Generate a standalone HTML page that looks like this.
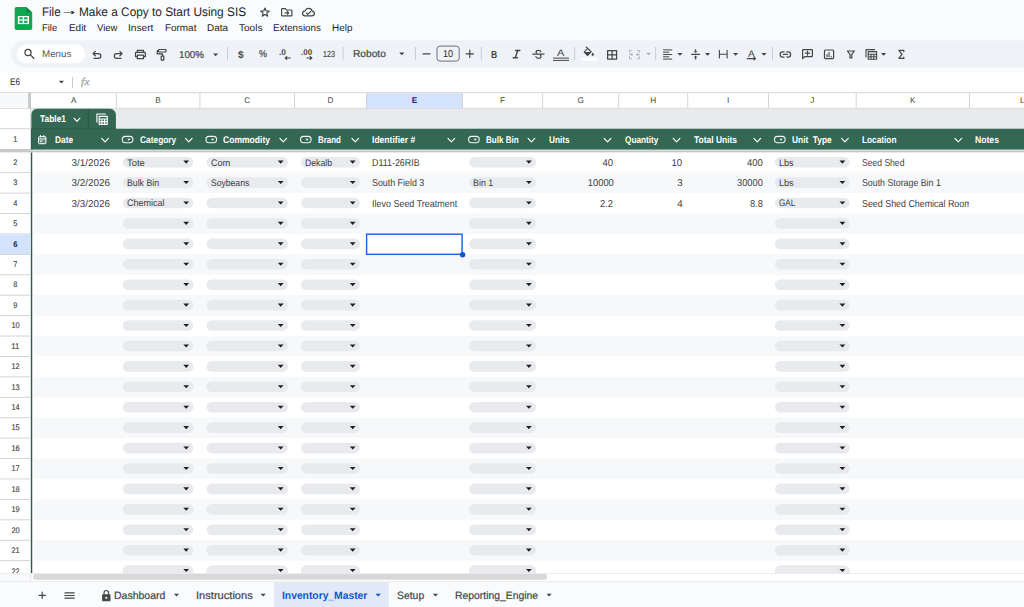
<!DOCTYPE html>
<html lang="en"><head><meta charset="utf-8"><title>File - Make a Copy to Start Using SIS</title>
<style>
html,body{margin:0;padding:0;}
body{width:1024px;height:607px;overflow:hidden;position:relative;background:#f9fbfd;font-family:"Liberation Sans",sans-serif;}
.b{position:absolute;}
.t{position:absolute;white-space:nowrap;display:block;text-rendering:geometricPrecision;}
svg.ov{position:absolute;left:0;top:0;pointer-events:none;}
</style></head><body>
<svg class="ov" width="1024" height="607" viewBox="0 0 1024 607">
<rect x="11.00" y="40.40" width="1040.00" height="26.80" rx="13.4" ry="13.4" fill="#eff2f7"/>
<rect x="16.80" y="44.40" width="68.40" height="18.80" rx="9.4" ry="9.4" fill="#fff"/>
<rect x="0.00" y="72.60" width="1024.00" height="19.80" fill="#fff"/>
<rect x="227.00" y="47.00" width="0.90" height="13.20" fill="#c7c7c7"/>
<rect x="342.60" y="47.00" width="0.90" height="13.20" fill="#c7c7c7"/>
<rect x="414.90" y="47.00" width="0.90" height="13.20" fill="#c7c7c7"/>
<rect x="437.00" y="46.10" width="22.20" height="15.00" rx="3" ry="3" fill="none" stroke="#5f6368" stroke-width="0.9"/>
<rect x="480.80" y="47.00" width="0.90" height="13.20" fill="#c7c7c7"/>
<rect x="553.00" y="57.60" width="16.00" height="1.00" fill="#444746"/>
<rect x="553.00" y="59.90" width="16.00" height="1.00" fill="#444746"/>
<rect x="574.20" y="47.00" width="0.90" height="13.20" fill="#c7c7c7"/>
<rect x="581.00" y="58.00" width="16.00" height="2.70" fill="#fff"/>
<rect x="655.20" y="47.00" width="0.90" height="13.20" fill="#c7c7c7"/>
<rect x="663.10" y="49.40" width="9.10" height="1.00" fill="#444746"/>
<rect x="663.10" y="51.70" width="6.10" height="1.00" fill="#444746"/>
<rect x="663.10" y="54.00" width="9.10" height="1.00" fill="#444746"/>
<rect x="663.10" y="56.30" width="6.10" height="1.00" fill="#444746"/>
<rect x="663.10" y="58.60" width="9.10" height="1.00" fill="#444746"/>
<rect x="772.10" y="47.00" width="0.90" height="13.20" fill="#c7c7c7"/>
<rect x="72.10" y="77.00" width="0.90" height="11.00" fill="#c7c7c7"/>
<rect x="0.00" y="92.40" width="1024.00" height="480.60" fill="#fff"/>
<rect x="0.00" y="92.30" width="1024.00" height="0.90" fill="#d0d0d0"/>
<rect x="0.00" y="107.90" width="1024.00" height="0.90" fill="#cfcfcf"/>
<rect x="0.00" y="93.20" width="28.20" height="14.70" fill="#f8f9fa"/>
<rect x="28.20" y="92.80" width="2.80" height="16.00" fill="#c4c7c5"/>
<rect x="366.40" y="93.20" width="96.10" height="14.70" fill="#d3e3fd"/>
<rect x="115.80" y="93.20" width="0.90" height="14.70" fill="#cfcfcf"/>
<rect x="199.50" y="93.20" width="0.90" height="14.70" fill="#cfcfcf"/>
<rect x="294.00" y="93.20" width="0.90" height="14.70" fill="#cfcfcf"/>
<rect x="366.00" y="93.20" width="0.90" height="14.70" fill="#cfcfcf"/>
<rect x="462.10" y="93.20" width="0.90" height="14.70" fill="#cfcfcf"/>
<rect x="542.20" y="93.20" width="0.90" height="14.70" fill="#cfcfcf"/>
<rect x="618.30" y="93.20" width="0.90" height="14.70" fill="#cfcfcf"/>
<rect x="687.30" y="93.20" width="0.90" height="14.70" fill="#cfcfcf"/>
<rect x="768.00" y="93.20" width="0.90" height="14.70" fill="#cfcfcf"/>
<rect x="855.70" y="93.20" width="0.90" height="14.70" fill="#cfcfcf"/>
<rect x="969.00" y="93.20" width="0.90" height="14.70" fill="#cfcfcf"/>
<rect x="31.30" y="108.80" width="1024.00" height="19.90" fill="#e8eaed"/>
<path d="M37.20 108.80H109.90A6 6 0 0 1 115.90 114.80V129.20H31.20V114.80A6 6 0 0 1 37.20 108.80Z" fill="#356854"/>
<rect x="87.80" y="108.90" width="0.90" height="19.90" fill="#2b5643"/>
<rect x="31.30" y="128.70" width="1024.00" height="21.05" fill="#356854"/>
<rect x="31.30" y="128.40" width="84.60" height="0.80" fill="#2e5a47"/>
<rect x="0.00" y="108.80" width="30.40" height="464.20" fill="#fff"/>
<rect x="30.30" y="108.80" width="0.90" height="464.20" fill="#cfcfcf"/>
<rect x="31.00" y="128.70" width="1.25" height="21.05" fill="#2f5c4a"/>
<rect x="31.00" y="152.30" width="1.25" height="420.70" fill="#2f5c4a"/>
<rect x="0.00" y="172.22" width="30.30" height="0.90" fill="#cfcfcf"/>
<rect x="33.60" y="172.62" width="1024.00" height="20.42" fill="#f6f8f9"/>
<rect x="0.00" y="192.64" width="30.30" height="0.90" fill="#cfcfcf"/>
<rect x="0.00" y="213.06" width="30.30" height="0.90" fill="#cfcfcf"/>
<rect x="33.60" y="213.46" width="1024.00" height="20.42" fill="#f6f8f9"/>
<rect x="0.00" y="233.48" width="30.30" height="0.90" fill="#cfcfcf"/>
<rect x="0.00" y="234.28" width="30.30" height="19.92" fill="#d3e3fd"/>
<rect x="0.00" y="253.90" width="30.30" height="0.90" fill="#cfcfcf"/>
<rect x="33.60" y="254.30" width="1024.00" height="20.42" fill="#f6f8f9"/>
<rect x="0.00" y="274.32" width="30.30" height="0.90" fill="#cfcfcf"/>
<rect x="0.00" y="294.74" width="30.30" height="0.90" fill="#cfcfcf"/>
<rect x="33.60" y="295.14" width="1024.00" height="20.42" fill="#f6f8f9"/>
<rect x="0.00" y="315.16" width="30.30" height="0.90" fill="#cfcfcf"/>
<rect x="0.00" y="335.58" width="30.30" height="0.90" fill="#cfcfcf"/>
<rect x="33.60" y="335.98" width="1024.00" height="20.42" fill="#f6f8f9"/>
<rect x="0.00" y="356.00" width="30.30" height="0.90" fill="#cfcfcf"/>
<rect x="0.00" y="376.42" width="30.30" height="0.90" fill="#cfcfcf"/>
<rect x="33.60" y="376.82" width="1024.00" height="20.42" fill="#f6f8f9"/>
<rect x="0.00" y="396.84" width="30.30" height="0.90" fill="#cfcfcf"/>
<rect x="0.00" y="417.26" width="30.30" height="0.90" fill="#cfcfcf"/>
<rect x="33.60" y="417.66" width="1024.00" height="20.42" fill="#f6f8f9"/>
<rect x="0.00" y="437.68" width="30.30" height="0.90" fill="#cfcfcf"/>
<rect x="0.00" y="458.10" width="30.30" height="0.90" fill="#cfcfcf"/>
<rect x="33.60" y="458.50" width="1024.00" height="20.42" fill="#f6f8f9"/>
<rect x="0.00" y="478.52" width="30.30" height="0.90" fill="#cfcfcf"/>
<rect x="0.00" y="498.94" width="30.30" height="0.90" fill="#cfcfcf"/>
<rect x="33.60" y="499.34" width="1024.00" height="20.42" fill="#f6f8f9"/>
<rect x="0.00" y="519.36" width="30.30" height="0.90" fill="#cfcfcf"/>
<rect x="0.00" y="539.78" width="30.30" height="0.90" fill="#cfcfcf"/>
<rect x="33.60" y="540.18" width="1024.00" height="20.42" fill="#f6f8f9"/>
<rect x="0.00" y="560.20" width="30.30" height="0.90" fill="#cfcfcf"/>
<rect x="0.00" y="128.30" width="30.30" height="0.90" fill="#cfcfcf"/>
<rect x="0.00" y="149.00" width="31.00" height="3.35" fill="#c8c8c8"/>
<rect x="31.00" y="149.75" width="1024.00" height="0.90" fill="#e2e2e2"/>
<rect x="31.00" y="150.60" width="1024.00" height="1.75" fill="#c6c6c6"/>
<rect x="39.00" y="139.30" width="6.40" height="3.90" fill="rgba(255,255,255,0.22)"/>
<rect x="40.00" y="140.20" width="2.20" height="2.00" fill="rgba(255,255,255,0.6)"/>
<rect x="122.80" y="156.90" width="70.60" height="10.60" rx="5.3" ry="5.3" fill="#e8eaed"/>
<rect x="206.50" y="156.90" width="81.40" height="10.60" rx="5.3" ry="5.3" fill="#e8eaed"/>
<rect x="301.00" y="156.90" width="58.90" height="10.60" rx="5.3" ry="5.3" fill="#e8eaed"/>
<rect x="469.10" y="156.90" width="67.00" height="10.60" rx="5.3" ry="5.3" fill="#e8eaed"/>
<rect x="775.00" y="156.90" width="74.60" height="10.60" rx="5.3" ry="5.3" fill="#e8eaed"/>
<rect x="122.80" y="177.32" width="70.60" height="10.60" rx="5.3" ry="5.3" fill="#e8eaed"/>
<rect x="206.50" y="177.32" width="81.40" height="10.60" rx="5.3" ry="5.3" fill="#e8eaed"/>
<rect x="301.00" y="177.32" width="58.90" height="10.60" rx="5.3" ry="5.3" fill="#e8eaed"/>
<rect x="469.10" y="177.32" width="67.00" height="10.60" rx="5.3" ry="5.3" fill="#e8eaed"/>
<rect x="775.00" y="177.32" width="74.60" height="10.60" rx="5.3" ry="5.3" fill="#e8eaed"/>
<rect x="122.80" y="197.74" width="70.60" height="10.60" rx="5.3" ry="5.3" fill="#e8eaed"/>
<rect x="206.50" y="197.74" width="81.40" height="10.60" rx="5.3" ry="5.3" fill="#e8eaed"/>
<rect x="301.00" y="197.74" width="58.90" height="10.60" rx="5.3" ry="5.3" fill="#e8eaed"/>
<rect x="469.10" y="197.74" width="67.00" height="10.60" rx="5.3" ry="5.3" fill="#e8eaed"/>
<rect x="775.00" y="197.74" width="74.60" height="10.60" rx="5.3" ry="5.3" fill="#e8eaed"/>
<rect x="122.80" y="218.16" width="70.60" height="10.60" rx="5.3" ry="5.3" fill="#e8eaed"/>
<rect x="206.50" y="218.16" width="81.40" height="10.60" rx="5.3" ry="5.3" fill="#e8eaed"/>
<rect x="301.00" y="218.16" width="58.90" height="10.60" rx="5.3" ry="5.3" fill="#e8eaed"/>
<rect x="469.10" y="218.16" width="67.00" height="10.60" rx="5.3" ry="5.3" fill="#e8eaed"/>
<rect x="775.00" y="218.16" width="74.60" height="10.60" rx="5.3" ry="5.3" fill="#e8eaed"/>
<rect x="122.80" y="238.58" width="70.60" height="10.60" rx="5.3" ry="5.3" fill="#e8eaed"/>
<rect x="206.50" y="238.58" width="81.40" height="10.60" rx="5.3" ry="5.3" fill="#e8eaed"/>
<rect x="301.00" y="238.58" width="58.90" height="10.60" rx="5.3" ry="5.3" fill="#e8eaed"/>
<rect x="469.10" y="238.58" width="67.00" height="10.60" rx="5.3" ry="5.3" fill="#e8eaed"/>
<rect x="775.00" y="238.58" width="74.60" height="10.60" rx="5.3" ry="5.3" fill="#e8eaed"/>
<rect x="122.80" y="259.00" width="70.60" height="10.60" rx="5.3" ry="5.3" fill="#e8eaed"/>
<rect x="206.50" y="259.00" width="81.40" height="10.60" rx="5.3" ry="5.3" fill="#e8eaed"/>
<rect x="301.00" y="259.00" width="58.90" height="10.60" rx="5.3" ry="5.3" fill="#e8eaed"/>
<rect x="469.10" y="259.00" width="67.00" height="10.60" rx="5.3" ry="5.3" fill="#e8eaed"/>
<rect x="775.00" y="259.00" width="74.60" height="10.60" rx="5.3" ry="5.3" fill="#e8eaed"/>
<rect x="122.80" y="279.42" width="70.60" height="10.60" rx="5.3" ry="5.3" fill="#e8eaed"/>
<rect x="206.50" y="279.42" width="81.40" height="10.60" rx="5.3" ry="5.3" fill="#e8eaed"/>
<rect x="301.00" y="279.42" width="58.90" height="10.60" rx="5.3" ry="5.3" fill="#e8eaed"/>
<rect x="469.10" y="279.42" width="67.00" height="10.60" rx="5.3" ry="5.3" fill="#e8eaed"/>
<rect x="775.00" y="279.42" width="74.60" height="10.60" rx="5.3" ry="5.3" fill="#e8eaed"/>
<rect x="122.80" y="299.84" width="70.60" height="10.60" rx="5.3" ry="5.3" fill="#e8eaed"/>
<rect x="206.50" y="299.84" width="81.40" height="10.60" rx="5.3" ry="5.3" fill="#e8eaed"/>
<rect x="301.00" y="299.84" width="58.90" height="10.60" rx="5.3" ry="5.3" fill="#e8eaed"/>
<rect x="469.10" y="299.84" width="67.00" height="10.60" rx="5.3" ry="5.3" fill="#e8eaed"/>
<rect x="775.00" y="299.84" width="74.60" height="10.60" rx="5.3" ry="5.3" fill="#e8eaed"/>
<rect x="122.80" y="320.26" width="70.60" height="10.60" rx="5.3" ry="5.3" fill="#e8eaed"/>
<rect x="206.50" y="320.26" width="81.40" height="10.60" rx="5.3" ry="5.3" fill="#e8eaed"/>
<rect x="301.00" y="320.26" width="58.90" height="10.60" rx="5.3" ry="5.3" fill="#e8eaed"/>
<rect x="469.10" y="320.26" width="67.00" height="10.60" rx="5.3" ry="5.3" fill="#e8eaed"/>
<rect x="775.00" y="320.26" width="74.60" height="10.60" rx="5.3" ry="5.3" fill="#e8eaed"/>
<rect x="122.80" y="340.68" width="70.60" height="10.60" rx="5.3" ry="5.3" fill="#e8eaed"/>
<rect x="206.50" y="340.68" width="81.40" height="10.60" rx="5.3" ry="5.3" fill="#e8eaed"/>
<rect x="301.00" y="340.68" width="58.90" height="10.60" rx="5.3" ry="5.3" fill="#e8eaed"/>
<rect x="469.10" y="340.68" width="67.00" height="10.60" rx="5.3" ry="5.3" fill="#e8eaed"/>
<rect x="775.00" y="340.68" width="74.60" height="10.60" rx="5.3" ry="5.3" fill="#e8eaed"/>
<rect x="122.80" y="361.10" width="70.60" height="10.60" rx="5.3" ry="5.3" fill="#e8eaed"/>
<rect x="206.50" y="361.10" width="81.40" height="10.60" rx="5.3" ry="5.3" fill="#e8eaed"/>
<rect x="301.00" y="361.10" width="58.90" height="10.60" rx="5.3" ry="5.3" fill="#e8eaed"/>
<rect x="469.10" y="361.10" width="67.00" height="10.60" rx="5.3" ry="5.3" fill="#e8eaed"/>
<rect x="775.00" y="361.10" width="74.60" height="10.60" rx="5.3" ry="5.3" fill="#e8eaed"/>
<rect x="122.80" y="381.52" width="70.60" height="10.60" rx="5.3" ry="5.3" fill="#e8eaed"/>
<rect x="206.50" y="381.52" width="81.40" height="10.60" rx="5.3" ry="5.3" fill="#e8eaed"/>
<rect x="301.00" y="381.52" width="58.90" height="10.60" rx="5.3" ry="5.3" fill="#e8eaed"/>
<rect x="469.10" y="381.52" width="67.00" height="10.60" rx="5.3" ry="5.3" fill="#e8eaed"/>
<rect x="775.00" y="381.52" width="74.60" height="10.60" rx="5.3" ry="5.3" fill="#e8eaed"/>
<rect x="122.80" y="401.94" width="70.60" height="10.60" rx="5.3" ry="5.3" fill="#e8eaed"/>
<rect x="206.50" y="401.94" width="81.40" height="10.60" rx="5.3" ry="5.3" fill="#e8eaed"/>
<rect x="301.00" y="401.94" width="58.90" height="10.60" rx="5.3" ry="5.3" fill="#e8eaed"/>
<rect x="469.10" y="401.94" width="67.00" height="10.60" rx="5.3" ry="5.3" fill="#e8eaed"/>
<rect x="775.00" y="401.94" width="74.60" height="10.60" rx="5.3" ry="5.3" fill="#e8eaed"/>
<rect x="122.80" y="422.36" width="70.60" height="10.60" rx="5.3" ry="5.3" fill="#e8eaed"/>
<rect x="206.50" y="422.36" width="81.40" height="10.60" rx="5.3" ry="5.3" fill="#e8eaed"/>
<rect x="301.00" y="422.36" width="58.90" height="10.60" rx="5.3" ry="5.3" fill="#e8eaed"/>
<rect x="469.10" y="422.36" width="67.00" height="10.60" rx="5.3" ry="5.3" fill="#e8eaed"/>
<rect x="775.00" y="422.36" width="74.60" height="10.60" rx="5.3" ry="5.3" fill="#e8eaed"/>
<rect x="122.80" y="442.78" width="70.60" height="10.60" rx="5.3" ry="5.3" fill="#e8eaed"/>
<rect x="206.50" y="442.78" width="81.40" height="10.60" rx="5.3" ry="5.3" fill="#e8eaed"/>
<rect x="301.00" y="442.78" width="58.90" height="10.60" rx="5.3" ry="5.3" fill="#e8eaed"/>
<rect x="469.10" y="442.78" width="67.00" height="10.60" rx="5.3" ry="5.3" fill="#e8eaed"/>
<rect x="775.00" y="442.78" width="74.60" height="10.60" rx="5.3" ry="5.3" fill="#e8eaed"/>
<rect x="122.80" y="463.20" width="70.60" height="10.60" rx="5.3" ry="5.3" fill="#e8eaed"/>
<rect x="206.50" y="463.20" width="81.40" height="10.60" rx="5.3" ry="5.3" fill="#e8eaed"/>
<rect x="301.00" y="463.20" width="58.90" height="10.60" rx="5.3" ry="5.3" fill="#e8eaed"/>
<rect x="469.10" y="463.20" width="67.00" height="10.60" rx="5.3" ry="5.3" fill="#e8eaed"/>
<rect x="775.00" y="463.20" width="74.60" height="10.60" rx="5.3" ry="5.3" fill="#e8eaed"/>
<rect x="122.80" y="483.62" width="70.60" height="10.60" rx="5.3" ry="5.3" fill="#e8eaed"/>
<rect x="206.50" y="483.62" width="81.40" height="10.60" rx="5.3" ry="5.3" fill="#e8eaed"/>
<rect x="301.00" y="483.62" width="58.90" height="10.60" rx="5.3" ry="5.3" fill="#e8eaed"/>
<rect x="469.10" y="483.62" width="67.00" height="10.60" rx="5.3" ry="5.3" fill="#e8eaed"/>
<rect x="775.00" y="483.62" width="74.60" height="10.60" rx="5.3" ry="5.3" fill="#e8eaed"/>
<rect x="122.80" y="504.04" width="70.60" height="10.60" rx="5.3" ry="5.3" fill="#e8eaed"/>
<rect x="206.50" y="504.04" width="81.40" height="10.60" rx="5.3" ry="5.3" fill="#e8eaed"/>
<rect x="301.00" y="504.04" width="58.90" height="10.60" rx="5.3" ry="5.3" fill="#e8eaed"/>
<rect x="469.10" y="504.04" width="67.00" height="10.60" rx="5.3" ry="5.3" fill="#e8eaed"/>
<rect x="775.00" y="504.04" width="74.60" height="10.60" rx="5.3" ry="5.3" fill="#e8eaed"/>
<rect x="122.80" y="524.46" width="70.60" height="10.60" rx="5.3" ry="5.3" fill="#e8eaed"/>
<rect x="206.50" y="524.46" width="81.40" height="10.60" rx="5.3" ry="5.3" fill="#e8eaed"/>
<rect x="301.00" y="524.46" width="58.90" height="10.60" rx="5.3" ry="5.3" fill="#e8eaed"/>
<rect x="469.10" y="524.46" width="67.00" height="10.60" rx="5.3" ry="5.3" fill="#e8eaed"/>
<rect x="775.00" y="524.46" width="74.60" height="10.60" rx="5.3" ry="5.3" fill="#e8eaed"/>
<rect x="122.80" y="544.88" width="70.60" height="10.60" rx="5.3" ry="5.3" fill="#e8eaed"/>
<rect x="206.50" y="544.88" width="81.40" height="10.60" rx="5.3" ry="5.3" fill="#e8eaed"/>
<rect x="301.00" y="544.88" width="58.90" height="10.60" rx="5.3" ry="5.3" fill="#e8eaed"/>
<rect x="469.10" y="544.88" width="67.00" height="10.60" rx="5.3" ry="5.3" fill="#e8eaed"/>
<rect x="775.00" y="544.88" width="74.60" height="10.60" rx="5.3" ry="5.3" fill="#e8eaed"/>
<path d="M128.10 565.30H188.10A5.3 5.3 0 0 1 193.40 570.60V573.00H122.80V570.60A5.3 5.3 0 0 1 128.10 565.30Z" fill="#e8eaed"/>
<path d="M211.80 565.30H282.60A5.3 5.3 0 0 1 287.90 570.60V573.00H206.50V570.60A5.3 5.3 0 0 1 211.80 565.30Z" fill="#e8eaed"/>
<path d="M306.30 565.30H354.60A5.3 5.3 0 0 1 359.90 570.60V573.00H301.00V570.60A5.3 5.3 0 0 1 306.30 565.30Z" fill="#e8eaed"/>
<path d="M474.40 565.30H530.80A5.3 5.3 0 0 1 536.10 570.60V573.00H469.10V570.60A5.3 5.3 0 0 1 474.40 565.30Z" fill="#e8eaed"/>
<path d="M780.30 565.30H844.30A5.3 5.3 0 0 1 849.60 570.60V573.00H775.00V570.60A5.3 5.3 0 0 1 780.30 565.30Z" fill="#e8eaed"/>
<rect x="0.00" y="573.00" width="1024.00" height="0.80" fill="#e1e1e1"/>
<rect x="0.00" y="573.80" width="1024.00" height="8.00" fill="#fff"/>
<rect x="0.00" y="573.80" width="30.30" height="8.00" fill="#f8f9fa"/>
<rect x="30.30" y="573.80" width="0.90" height="8.00" fill="#dcdcdc"/>
<rect x="33.00" y="573.40" width="514.00" height="1.20" fill="#ececec"/>
<rect x="33.00" y="574.10" width="514.00" height="5.70" rx="2.7" ry="2.7" fill="#d8d8d8"/>
<rect x="0.00" y="581.40" width="1024.00" height="0.90" fill="#e1e3e6"/>
<rect x="0.00" y="582.30" width="1024.00" height="25.00" fill="#f9fbfd"/>
<rect x="274.10" y="582.30" width="114.70" height="25.00" fill="#e1e9f7"/>
</svg>
<span class="t" style="top:4.00px;height:16px;line-height:16px;font-size:12.4px;color:#1f1f1f;left:41.60px;transform:scaleX(0.9309);transform-origin:0 50%;">File</span>
<span class="t" style="top:7.00px;height:11px;line-height:11px;font-size:8px;color:#1f1f1f;font-family:'DejaVu Sans', sans-serif;left:63.40px;transform:scaleX(1.8);transform-origin:0 50%;">→</span>
<span class="t" style="top:4.00px;height:16px;line-height:16px;font-size:12.4px;color:#1f1f1f;left:79.20px;transform:scaleX(0.9551);transform-origin:0 50%;">Make a Copy to Start Using SIS</span>
<span class="t" style="top:22.00px;height:13px;line-height:13px;font-size:9.8px;color:#1f1f1f;left:42.30px;transform:scaleX(0.9562);transform-origin:0 50%;">File</span>
<span class="t" style="top:22.00px;height:13px;line-height:13px;font-size:9.8px;color:#1f1f1f;left:68.50px;transform:scaleX(1.0126);transform-origin:0 50%;">Edit</span>
<span class="t" style="top:22.00px;height:13px;line-height:13px;font-size:9.8px;color:#1f1f1f;left:96.70px;transform:scaleX(0.9684);transform-origin:0 50%;">View</span>
<span class="t" style="top:22.00px;height:13px;line-height:13px;font-size:9.8px;color:#1f1f1f;left:128.40px;transform:scaleX(1.0363);transform-origin:0 50%;">Insert</span>
<span class="t" style="top:22.00px;height:13px;line-height:13px;font-size:9.8px;color:#1f1f1f;left:164.80px;transform:scaleX(1.0117);transform-origin:0 50%;">Format</span>
<span class="t" style="top:22.00px;height:13px;line-height:13px;font-size:9.8px;color:#1f1f1f;left:207.30px;transform:scaleX(1.0096);transform-origin:0 50%;">Data</span>
<span class="t" style="top:22.00px;height:13px;line-height:13px;font-size:9.8px;color:#1f1f1f;left:238.80px;transform:scaleX(1.0228);transform-origin:0 50%;">Tools</span>
<span class="t" style="top:22.00px;height:13px;line-height:13px;font-size:9.8px;color:#1f1f1f;left:273.30px;transform:scaleX(0.9992);transform-origin:0 50%;">Extensions</span>
<span class="t" style="top:22.00px;height:13px;line-height:13px;font-size:9.8px;color:#1f1f1f;left:331.80px;transform:scaleX(1.0121);transform-origin:0 50%;">Help</span>
<span class="t" style="top:48.00px;height:13px;line-height:13px;font-size:9.7px;color:#5a5d61;left:41.50px;transform:scaleX(1.0098);transform-origin:0 50%;">Menus</span>
<span class="t" style="top:49.00px;height:13px;line-height:13px;font-size:10px;color:#444746;left:178.90px;transform:scaleX(0.9775);transform-origin:0 50%;-webkit-text-stroke:0.2px #444746;">100%</span>
<span class="t" style="top:49.00px;height:13px;line-height:13px;font-size:10px;color:#444746;font-weight:700;left:238.30px;transform:scaleX(1.0069);transform-origin:0 50%;">$</span>
<span class="t" style="top:48.00px;height:13px;line-height:13px;font-size:9.8px;color:#444746;left:259.30px;transform:scaleX(0.9181);transform-origin:0 50%;-webkit-text-stroke:0.2px #444746;">%</span>
<span class="t" style="top:47.00px;height:11px;line-height:11px;font-size:8.4px;color:#444746;font-weight:700;left:278.70px;transform:scaleX(0.9992);transform-origin:0 50%;">.0</span>
<span class="t" style="top:47.00px;height:11px;line-height:11px;font-size:8.4px;color:#444746;font-weight:700;left:300.80px;transform:scaleX(0.9591);transform-origin:0 50%;">.00</span>
<span class="t" style="top:48.00px;height:12px;line-height:12px;font-size:8.8px;color:#444746;left:323.20px;transform:scaleX(0.8173);transform-origin:0 50%;-webkit-text-stroke:0.15px #444746;">123</span>
<span class="t" style="top:48.00px;height:13px;line-height:13px;font-size:10px;color:#444746;left:353.40px;transform:scaleX(1.0172);transform-origin:0 50%;-webkit-text-stroke:0.2px #444746;">Roboto</span>
<span class="t" style="top:48.00px;height:13px;line-height:13px;font-size:10px;color:#1f1f1f;left:443.40px;transform:scaleX(0.8990);transform-origin:0 50%;">10</span>
<span class="t" style="top:49.00px;height:13px;line-height:13px;font-size:10.2px;color:#444746;font-weight:700;left:491.20px;transform:scaleX(0.8417);transform-origin:0 50%;">B</span>
<span class="t" style="top:47.00px;height:13px;line-height:13px;font-size:9.6px;color:#444746;left:557.20px;transform:scaleX(1.1556);transform-origin:0 50%;">A</span>
<span class="t" style="top:48.00px;height:12px;line-height:12px;font-size:9.4px;color:#444746;left:748.20px;transform:scaleX(1.0845);transform-origin:0 50%;">A</span>
<span class="t" style="top:76.00px;height:13px;line-height:13px;font-size:9.6px;color:#1f1f1f;left:9.60px;transform:scaleX(0.8516);transform-origin:0 50%;">E6</span>
<span class="t" style="top:76.00px;height:14px;line-height:14px;font-size:10.5px;color:#a3a6a9;font-style:italic;font-family:'Liberation Serif', serif;left:80.90px;transform:scaleX(1.1265);transform-origin:0 50%;-webkit-text-stroke:0.25px #a3a6a9;">fx</span>
<span class="t" style="top:95.00px;height:11px;line-height:11px;font-size:8.2px;color:#444746;left:71.02px;width:5.47px;text-align:center;">A</span>
<span class="t" style="top:95.00px;height:11px;line-height:11px;font-size:8.2px;color:#444746;left:155.32px;width:5.47px;text-align:center;">B</span>
<span class="t" style="top:95.00px;height:11px;line-height:11px;font-size:8.2px;color:#444746;left:244.19px;width:5.92px;text-align:center;">C</span>
<span class="t" style="top:95.00px;height:11px;line-height:11px;font-size:8.2px;color:#444746;left:327.44px;width:5.92px;text-align:center;">D</span>
<span class="t" style="top:95.00px;height:11px;line-height:11px;font-size:8.2px;color:#0a2a66;font-weight:700;left:411.72px;width:5.47px;text-align:center;">E</span>
<span class="t" style="top:95.00px;height:11px;line-height:11px;font-size:8.2px;color:#444746;left:500.05px;width:5.01px;text-align:center;">F</span>
<span class="t" style="top:95.00px;height:11px;line-height:11px;font-size:8.2px;color:#444746;left:577.46px;width:6.38px;text-align:center;">G</span>
<span class="t" style="top:95.00px;height:11px;line-height:11px;font-size:8.2px;color:#444746;left:650.24px;width:5.92px;text-align:center;">H</span>
<span class="t" style="top:95.00px;height:11px;line-height:11px;font-size:8.2px;color:#444746;left:726.91px;width:2.28px;text-align:center;">I</span>
<span class="t" style="top:95.00px;height:11px;line-height:11px;font-size:8.2px;color:#444746;left:810.20px;width:4.10px;text-align:center;">J</span>
<span class="t" style="top:95.00px;height:11px;line-height:11px;font-size:8.2px;color:#444746;left:910.02px;width:5.47px;text-align:center;">K</span>
<span class="t" style="top:95.00px;height:11px;line-height:11px;font-size:8.2px;color:#444746;left:1019.92px;width:4.56px;text-align:center;">L</span>
<span class="t" style="top:113.00px;height:13px;line-height:13px;font-size:9.7px;color:#fff;font-weight:700;left:39.60px;transform:scaleX(0.8664);transform-origin:0 50%;">Table1</span>
<span class="t" style="top:134.00px;height:11px;line-height:11px;font-size:8.2px;color:#444746;left:13.12px;width:4.56px;text-align:center;transform:scaleX(0.8990);-webkit-text-stroke:0.15px #444746;">1</span>
<span class="t" style="top:157.00px;height:11px;line-height:11px;font-size:8.2px;color:#444746;left:13.12px;width:4.56px;text-align:center;transform:scaleX(0.8990);-webkit-text-stroke:0.15px #444746;">2</span>
<span class="t" style="top:177.00px;height:11px;line-height:11px;font-size:8.2px;color:#444746;left:13.12px;width:4.56px;text-align:center;transform:scaleX(0.8990);-webkit-text-stroke:0.15px #444746;">3</span>
<span class="t" style="top:198.00px;height:11px;line-height:11px;font-size:8.2px;color:#444746;left:13.12px;width:4.56px;text-align:center;transform:scaleX(0.8990);-webkit-text-stroke:0.15px #444746;">4</span>
<span class="t" style="top:218.00px;height:11px;line-height:11px;font-size:8.2px;color:#444746;left:13.12px;width:4.56px;text-align:center;transform:scaleX(0.8990);-webkit-text-stroke:0.15px #444746;">5</span>
<span class="t" style="top:239.00px;height:11px;line-height:11px;font-size:8.2px;color:#0a2a66;font-weight:700;left:13.12px;width:4.56px;text-align:center;transform:scaleX(0.9209);">6</span>
<span class="t" style="top:259.00px;height:11px;line-height:11px;font-size:8.2px;color:#444746;left:13.12px;width:4.56px;text-align:center;transform:scaleX(0.8990);-webkit-text-stroke:0.15px #444746;">7</span>
<span class="t" style="top:279.00px;height:11px;line-height:11px;font-size:8.2px;color:#444746;left:13.12px;width:4.56px;text-align:center;transform:scaleX(0.8990);-webkit-text-stroke:0.15px #444746;">8</span>
<span class="t" style="top:300.00px;height:11px;line-height:11px;font-size:8.2px;color:#444746;left:13.12px;width:4.56px;text-align:center;transform:scaleX(0.8990);-webkit-text-stroke:0.15px #444746;">9</span>
<span class="t" style="top:320.00px;height:11px;line-height:11px;font-size:8.2px;color:#444746;left:10.84px;width:9.12px;text-align:center;transform:scaleX(0.8990);-webkit-text-stroke:0.15px #444746;">10</span>
<span class="t" style="top:341.00px;height:11px;line-height:11px;font-size:8.2px;color:#444746;left:11.14px;width:8.51px;text-align:center;transform:scaleX(0.9633);-webkit-text-stroke:0.15px #444746;">11</span>
<span class="t" style="top:361.00px;height:11px;line-height:11px;font-size:8.2px;color:#444746;left:10.84px;width:9.12px;text-align:center;transform:scaleX(0.8990);-webkit-text-stroke:0.15px #444746;">12</span>
<span class="t" style="top:382.00px;height:11px;line-height:11px;font-size:8.2px;color:#444746;left:10.84px;width:9.12px;text-align:center;transform:scaleX(0.8990);-webkit-text-stroke:0.15px #444746;">13</span>
<span class="t" style="top:402.00px;height:11px;line-height:11px;font-size:8.2px;color:#444746;left:10.84px;width:9.12px;text-align:center;transform:scaleX(0.8990);-webkit-text-stroke:0.15px #444746;">14</span>
<span class="t" style="top:422.00px;height:11px;line-height:11px;font-size:8.2px;color:#444746;left:10.84px;width:9.12px;text-align:center;transform:scaleX(0.8990);-webkit-text-stroke:0.15px #444746;">15</span>
<span class="t" style="top:443.00px;height:11px;line-height:11px;font-size:8.2px;color:#444746;left:10.84px;width:9.12px;text-align:center;transform:scaleX(0.8990);-webkit-text-stroke:0.15px #444746;">16</span>
<span class="t" style="top:463.00px;height:11px;line-height:11px;font-size:8.2px;color:#444746;left:10.84px;width:9.12px;text-align:center;transform:scaleX(0.8990);-webkit-text-stroke:0.15px #444746;">17</span>
<span class="t" style="top:484.00px;height:11px;line-height:11px;font-size:8.2px;color:#444746;left:10.84px;width:9.12px;text-align:center;transform:scaleX(0.8990);-webkit-text-stroke:0.15px #444746;">18</span>
<span class="t" style="top:504.00px;height:11px;line-height:11px;font-size:8.2px;color:#444746;left:10.84px;width:9.12px;text-align:center;transform:scaleX(0.8990);-webkit-text-stroke:0.15px #444746;">19</span>
<span class="t" style="top:525.00px;height:11px;line-height:11px;font-size:8.2px;color:#444746;left:10.84px;width:9.12px;text-align:center;transform:scaleX(0.8990);-webkit-text-stroke:0.15px #444746;">20</span>
<span class="t" style="top:545.00px;height:11px;line-height:11px;font-size:8.2px;color:#444746;left:10.84px;width:9.12px;text-align:center;transform:scaleX(0.8990);-webkit-text-stroke:0.15px #444746;">21</span>
<span class="t" style="top:566.00px;height:11px;line-height:11px;font-size:8.2px;color:#444746;left:10.84px;width:9.12px;text-align:center;transform:scaleX(0.8990);-webkit-text-stroke:0.15px #444746;clip-path:inset(0 0 4.00px 0);">22</span>
<span class="t" style="top:134.00px;height:13px;line-height:13px;font-size:9.7px;color:#fff;font-weight:700;left:54.80px;transform:scaleX(0.8609);transform-origin:0 50%;white-space:pre;">Date</span>
<span class="t" style="top:134.00px;height:13px;line-height:13px;font-size:9.7px;color:#fff;font-weight:700;left:139.70px;transform:scaleX(0.8633);transform-origin:0 50%;white-space:pre;">Category</span>
<span class="t" style="top:134.00px;height:13px;line-height:13px;font-size:9.7px;color:#fff;font-weight:700;left:223.40px;transform:scaleX(0.8828);transform-origin:0 50%;white-space:pre;">Commodity</span>
<span class="t" style="top:134.00px;height:13px;line-height:13px;font-size:9.7px;color:#fff;font-weight:700;left:317.90px;transform:scaleX(0.8171);transform-origin:0 50%;white-space:pre;">Brand</span>
<span class="t" style="top:134.00px;height:13px;line-height:13px;font-size:9.7px;color:#fff;font-weight:700;left:372.30px;transform:scaleX(0.8828);transform-origin:0 50%;white-space:pre;">Identifier #</span>
<span class="t" style="top:134.00px;height:13px;line-height:13px;font-size:9.7px;color:#fff;font-weight:700;left:486.00px;transform:scaleX(0.8338);transform-origin:0 50%;white-space:pre;">Bulk Bin</span>
<span class="t" style="top:134.00px;height:13px;line-height:13px;font-size:9.7px;color:#fff;font-weight:700;left:548.50px;transform:scaleX(0.8536);transform-origin:0 50%;white-space:pre;">Units</span>
<span class="t" style="top:134.00px;height:13px;line-height:13px;font-size:9.7px;color:#fff;font-weight:700;left:624.60px;transform:scaleX(0.8515);transform-origin:0 50%;white-space:pre;">Quantity</span>
<span class="t" style="top:134.00px;height:13px;line-height:13px;font-size:9.7px;color:#fff;font-weight:700;left:693.60px;transform:scaleX(0.8725);transform-origin:0 50%;white-space:pre;">Total Units</span>
<span class="t" style="top:134.00px;height:13px;line-height:13px;font-size:9.7px;color:#fff;font-weight:700;left:791.90px;transform:scaleX(0.8621);transform-origin:0 50%;white-space:pre;">Unit  Type</span>
<span class="t" style="top:134.00px;height:13px;line-height:13px;font-size:9.7px;color:#fff;font-weight:700;left:862.00px;transform:scaleX(0.8536);transform-origin:0 50%;white-space:pre;">Location</span>
<span class="t" style="top:134.00px;height:13px;line-height:13px;font-size:9.7px;color:#fff;font-weight:700;left:975.30px;transform:scaleX(0.8905);transform-origin:0 50%;white-space:pre;">Notes</span>
<span class="t" style="top:157.00px;height:13px;line-height:13px;font-size:9.5px;color:#3c4043;left:127.10px;transform:scaleX(0.9913);transform-origin:0 50%;">Tote</span>
<span class="t" style="top:157.00px;height:13px;line-height:13px;font-size:9.5px;color:#3c4043;left:210.80px;transform:scaleX(0.9373);transform-origin:0 50%;">Corn</span>
<span class="t" style="top:157.00px;height:13px;line-height:13px;font-size:9.5px;color:#3c4043;left:305.30px;transform:scaleX(0.9130);transform-origin:0 50%;">Dekalb</span>
<span class="t" style="top:157.00px;height:13px;line-height:13px;font-size:9.5px;color:#3c4043;left:779.30px;transform:scaleX(0.9532);transform-origin:0 50%;">Lbs</span>
<span class="t" style="top:177.00px;height:13px;line-height:13px;font-size:9.5px;color:#3c4043;left:127.10px;transform:scaleX(0.9182);transform-origin:0 50%;">Bulk Bin</span>
<span class="t" style="top:177.00px;height:13px;line-height:13px;font-size:9.5px;color:#3c4043;left:210.80px;transform:scaleX(0.9040);transform-origin:0 50%;">Soybeans</span>
<span class="t" style="top:177.00px;height:13px;line-height:13px;font-size:9.5px;color:#3c4043;left:473.40px;transform:scaleX(0.9329);transform-origin:0 50%;">Bin 1</span>
<span class="t" style="top:177.00px;height:13px;line-height:13px;font-size:9.5px;color:#3c4043;left:779.30px;transform:scaleX(0.9532);transform-origin:0 50%;">Lbs</span>
<span class="t" style="top:197.00px;height:13px;line-height:13px;font-size:9.5px;color:#3c4043;left:127.10px;transform:scaleX(0.9496);transform-origin:0 50%;">Chemical</span>
<span class="t" style="top:197.00px;height:13px;line-height:13px;font-size:9.5px;color:#3c4043;left:779.30px;transform:scaleX(0.8522);transform-origin:0 50%;">GAL</span>
<span class="t" style="top:157.00px;height:13px;line-height:13px;font-size:10px;color:#3c4043;right:913.80px;transform:scaleX(0.9865);transform-origin:100% 50%;">3/1/2026</span>
<span class="t" style="top:177.00px;height:13px;line-height:13px;font-size:10px;color:#3c4043;right:913.80px;transform:scaleX(0.9865);transform-origin:100% 50%;">3/2/2026</span>
<span class="t" style="top:198.00px;height:13px;line-height:13px;font-size:10px;color:#3c4043;right:913.80px;transform:scaleX(0.9865);transform-origin:100% 50%;">3/3/2026</span>
<span class="t" style="top:157.00px;height:13px;line-height:13px;font-size:10px;color:#3c4043;left:372.20px;transform:scaleX(0.8889);transform-origin:0 50%;">D111-26RIB</span>
<span class="t" style="top:177.00px;height:13px;line-height:13px;font-size:10px;color:#3c4043;left:372.20px;transform:scaleX(0.8858);transform-origin:0 50%;">South Field 3</span>
<span class="t" style="top:198.00px;height:13px;line-height:13px;font-size:10px;color:#3c4043;left:372.20px;transform:scaleX(0.8963);transform-origin:0 50%;">Ilevo Seed Treatment</span>
<span class="t" style="top:157.00px;height:13px;line-height:13px;font-size:10px;color:#3c4043;right:410.70px;transform:scaleX(0.9619);transform-origin:100% 50%;">40</span>
<span class="t" style="top:177.00px;height:13px;line-height:13px;font-size:10px;color:#3c4043;right:410.70px;transform:scaleX(0.9350);transform-origin:100% 50%;">10000</span>
<span class="t" style="top:198.00px;height:13px;line-height:13px;font-size:10px;color:#3c4043;right:410.70px;transform:scaleX(0.9351);transform-origin:100% 50%;">2.2</span>
<span class="t" style="top:157.00px;height:13px;line-height:13px;font-size:10px;color:#3c4043;right:341.70px;transform:scaleX(0.9619);transform-origin:100% 50%;">10</span>
<span class="t" style="top:177.00px;height:13px;line-height:13px;font-size:10px;color:#3c4043;right:341.70px;transform:scaleX(0.9709);transform-origin:100% 50%;">3</span>
<span class="t" style="top:198.00px;height:13px;line-height:13px;font-size:10px;color:#3c4043;right:341.70px;transform:scaleX(0.9709);transform-origin:100% 50%;">4</span>
<span class="t" style="top:157.00px;height:13px;line-height:13px;font-size:10px;color:#3c4043;right:261.00px;transform:scaleX(0.9469);transform-origin:100% 50%;">400</span>
<span class="t" style="top:177.00px;height:13px;line-height:13px;font-size:10px;color:#3c4043;right:261.00px;transform:scaleX(0.9278);transform-origin:100% 50%;">30000</span>
<span class="t" style="top:198.00px;height:13px;line-height:13px;font-size:10px;color:#3c4043;right:261.00px;transform:scaleX(0.9351);transform-origin:100% 50%;">8.8</span>
<span class="t" style="top:157.00px;height:13px;line-height:13px;font-size:10px;color:#3c4043;left:861.90px;transform:scaleX(0.8568);transform-origin:0 50%;">Seed Shed</span>
<span class="t" style="top:177.00px;height:13px;line-height:13px;font-size:10px;color:#3c4043;left:861.90px;transform:scaleX(0.8804);transform-origin:0 50%;">South Storage Bin 1</span>
<div class="b" style="left:856.10px;top:193.04px;width:112.70px;height:20.42px;overflow:hidden;">
<span class="t" style="left:5.8px;top:4.96px;height:13px;line-height:13px;font-size:10px;color:#3c4043;transform:scaleX(0.8882);transform-origin:0 50%;">Seed Shed Chemical Room</span></div>
<span class="t" style="top:589.00px;height:14px;line-height:14px;font-size:10.7px;color:#444746;left:114.20px;transform:scaleX(0.9819);transform-origin:0 50%;-webkit-text-stroke:0.2px #444746;">Dashboard</span>
<span class="t" style="top:589.00px;height:14px;line-height:14px;font-size:10.7px;color:#444746;left:195.80px;transform:scaleX(1.0381);transform-origin:0 50%;-webkit-text-stroke:0.2px #444746;">Instructions</span>
<span class="t" style="top:589.00px;height:14px;line-height:14px;font-size:10.7px;color:#0b57d0;font-weight:700;left:282.00px;transform:scaleX(0.9638);transform-origin:0 50%;">Inventory_Master</span>
<span class="t" style="top:589.00px;height:14px;line-height:14px;font-size:10.7px;color:#444746;left:397.40px;transform:scaleX(0.9727);transform-origin:0 50%;-webkit-text-stroke:0.2px #444746;">Setup</span>
<span class="t" style="top:589.00px;height:14px;line-height:14px;font-size:10.7px;color:#444746;left:455.20px;transform:scaleX(0.9712);transform-origin:0 50%;-webkit-text-stroke:0.2px #444746;">Reporting_Engine</span>
<svg class="ov" width="1024" height="607" viewBox="0 0 1024 607">
<defs><clipPath id="gclip"><rect x="0" y="0" width="1024" height="573.00"/></clipPath></defs>
<path d="M16.4 6.9H26.2L32.2 12.6V28.3Q32.2 30 30.5 30H16.4Q14.7 30 14.7 28.3V8.6Q14.7 6.9 16.4 6.9Z" fill="#10a753"/>
<path d="M26.2 6.9L32.2 12.6H27.4Q26.2 12.6 26.2 11.4Z" fill="#0b8a40"/>
<rect x="17.8" y="16" width="11.2" height="8.1" fill="#fff"/>
<rect x="19.3" y="17.3" width="3.4" height="2.1" fill="#10a753"/>
<rect x="24.1" y="17.3" width="3.4" height="2.1" fill="#10a753"/>
<rect x="19.3" y="20.75" width="3.4" height="2.1" fill="#10a753"/>
<rect x="24.1" y="20.75" width="3.4" height="2.1" fill="#10a753"/>
<path d="M264.95 8.00L266.13 10.88L269.23 11.11L266.85 13.12L267.60 16.14L264.95 14.50L262.30 16.14L263.05 13.12L260.67 11.11L263.77 10.88Z" fill="none" stroke="#444746" stroke-width="1.2" stroke-linecap="round" stroke-linejoin="round" />
<path d="M281.6 9.3Q281.6 8.6 282.3 8.6H285.3L286.6 10H291.2Q291.9 10 291.9 10.7V15.2Q291.9 15.9 291.2 15.9H282.3Q281.6 15.9 281.6 15.2Z" fill="none" stroke="#444746" stroke-width="1.2" stroke-linecap="round" stroke-linejoin="round" />
<path d="M285 12.9H288.6M287.3 11.4L288.8 12.9L287.3 14.4" fill="none" stroke="#444746" stroke-width="1.1" stroke-linecap="round" stroke-linejoin="round" />
<path d="M305.2 15.9H311.6Q314.4 15.9 314.4 13.5Q314.4 11.4 312.2 11.2Q311.6 8.4 308.5 8.4Q306 8.4 305.1 10.8Q302.5 11.1 302.5 13.5Q302.5 15.9 305.2 15.9Z" fill="none" stroke="#444746" stroke-width="1.2" stroke-linecap="round" stroke-linejoin="round" />
<path d="M306.4 13L307.8 14.4L310.7 11.5" fill="none" stroke="#444746" stroke-width="1.1" stroke-linecap="round" stroke-linejoin="round" />
<circle cx="28" cy="52.5" r="3.1" fill="none" stroke="#444746" stroke-width="1.2"/>
<path d="M30.4 54.9L33.8 58.3" fill="none" stroke="#444746" stroke-width="1.3" stroke-linecap="round" stroke-linejoin="round" />
<path d="M94 58.3H98.4Q100.9 58.3 100.9 55.95Q100.9 53.6 98.4 53.6H93.4M95.3 51.4L93.1 53.6L95.3 55.8" fill="none" stroke="#444746" stroke-width="1.25" stroke-linecap="round" stroke-linejoin="round" />
<path d="M121 58.3H116.8Q114.3 58.3 114.3 55.95Q114.3 53.6 116.8 53.6H121.8M119.9 51.4L122.1 53.6L119.9 55.8" fill="none" stroke="#444746" stroke-width="1.25" stroke-linecap="round" stroke-linejoin="round" />
<path d="M137.3 52.4V50.3H143.5V52.4M137.3 56.7H135.5V52.9Q135.5 52.4 136 52.4H144.8Q145.3 52.4 145.3 52.9V56.7H143.5M137.3 55.2H143.5V58.7H137.3Z" fill="none" stroke="#444746" stroke-width="1.2" stroke-linecap="round" stroke-linejoin="round" />
<path d="M159.1 49.5H165.5Q166 49.5 166 50V51.5Q166 52 165.5 52H159.1Q158.6 52 158.6 51.5V50Q158.6 49.5 159.1 49.5ZM158.6 50.7H157.3V53.9H162.5V56.1M161.2 56.1H163.8V60.1H161.2Z" fill="none" stroke="#444746" stroke-width="1.2" stroke-linecap="round" stroke-linejoin="round" />
<path d="M213.00 53.45h5.2l-2.6 2.7z" fill="#444746" />
<path d="M285.3 58H290.2M286.8 56.6L285.2 58L286.8 59.4" fill="none" stroke="#444746" stroke-width="1.2" stroke-linecap="round" stroke-linejoin="round" />
<path d="M306.8 58H311.7M310.2 56.6L311.8 58L310.2 59.4" fill="none" stroke="#444746" stroke-width="1.2" stroke-linecap="round" stroke-linejoin="round" />
<path d="M399.20 52.45h5.2l-2.6 2.7z" fill="#444746" />
<path d="M423 53.8H430" fill="none" stroke="#444746" stroke-width="1.2" stroke-linecap="round" stroke-linejoin="round" />
<path d="M466.2 53.8H473.4M469.8 50.2V57.4" fill="none" stroke="#444746" stroke-width="1.2" stroke-linecap="round" stroke-linejoin="round" />
<path d="M515.6 50.5H519.8M513.2 57.8H517.4M517.7 50.5L515.3 57.8" fill="none" stroke="#444746" stroke-width="1.4" stroke-linecap="round" stroke-linejoin="round" />
<path d="M540.9 51.8Q540.5 50.3 538.4 50.3Q536.1 50.3 536.1 52Q536.1 52.8 536.8 53.2M535.9 56.6Q536.4 58.3 538.5 58.3Q541 58.3 541 56.5Q541 55.6 540.2 55.1" fill="none" stroke="#444746" stroke-width="1.2" stroke-linecap="round" stroke-linejoin="round" />
<path d="M532.8 54.1H544" fill="none" stroke="#444746" stroke-width="1.1" stroke-linecap="round" stroke-linejoin="round" />
<path d="M586.3 46.3L585.5 47.1L586.9 48.5L583.9 51.5Q583.4 52 583.9 52.6L587 55.7Q587.5 56.2 588.1 55.7L591.7 52.1Q592 51.8 591.7 51.5ZM587.6 49.3L590.4 52H584.9Z" fill="#444746" />
<path d="M592.8 52.6Q594 54 594 54.7Q594 55.8 592.8 55.8Q591.6 55.8 591.6 54.7Q591.6 54 592.8 52.6Z" fill="#444746" />
<path d="M607.6 50.5H616.6V59H607.6ZM612.1 50.5V59M607.6 54.75H616.6" fill="none" stroke="#444746" stroke-width="1.25" stroke-linecap="round" stroke-linejoin="round" />
<path d="M631.5 50.4H629.5V52.6M637.4 50.4H639.4V52.6M631.5 58.8H629.5V56.6M637.4 58.8H639.4V56.6M629.4 54.6H632.6M631.4 53.4L632.8 54.6L631.4 55.8M639.6 54.6H636.4M637.6 53.4L636.2 54.6L637.6 55.8" fill="none" stroke="#b4b7ba" stroke-width="1.0" stroke-linecap="round" stroke-linejoin="round" />
<path d="M646.00 52.85h5.2l-2.6 2.7z" fill="#b4b7ba" />
<path d="M677.40 52.95h5.2l-2.6 2.7z" fill="#444746" />
<path d="M691.6 54.3H699.6" fill="none" stroke="#444746" stroke-width="1.15" stroke-linecap="round" stroke-linejoin="round" />
<path d="M695.6 53.1L693.8 51.1H695.05V49.2H696.15V51.1H697.4ZM695.6 55.5L693.8 57.5H695.05V59.4H696.15V57.5H697.4Z" fill="#444746" />
<path d="M705.00 52.95h5.2l-2.6 2.7z" fill="#444746" />
<path d="M719.4 50.4V58M727.1 50.4V58M719.4 54.2H727.1" fill="none" stroke="#444746" stroke-width="1.1" stroke-linecap="round" stroke-linejoin="round" />
<path d="M733.00 52.95h5.2l-2.6 2.7z" fill="#444746" />
<path d="M747.2 58.6H755.4M753.9 57.2L755.6 58.6L753.9 60" fill="none" stroke="#444746" stroke-width="1.05" stroke-linecap="round" stroke-linejoin="round" />
<path d="M761.40 52.95h5.2l-2.6 2.7z" fill="#444746" />
<path d="M784 51.9H782.6Q780.2 51.9 780.2 54.45Q780.2 57 782.6 57H784M786.8 51.9H788.2Q790.6 51.9 790.6 54.45Q790.6 57 788.2 57H786.8M783.4 54.45H787.4" fill="none" stroke="#444746" stroke-width="1.25" stroke-linecap="round" stroke-linejoin="round" />
<path d="M802.6 50.3Q802.6 49.6 803.3 49.6H811.7Q812.4 49.6 812.4 50.3V56Q812.4 56.7 811.7 56.7H804.6L802.6 58.7Z" fill="none" stroke="#444746" stroke-width="1.2" stroke-linecap="round" stroke-linejoin="round" />
<path d="M805.4 53.15H809.6M807.5 51.05V55.25" fill="none" stroke="#444746" stroke-width="1.1" stroke-linecap="round" stroke-linejoin="round" />
<path d="M824.5 51Q824.5 50 825.5 50H832.6Q833.6 50 833.6 51V57.6Q833.6 58.6 832.6 58.6H825.5Q824.5 58.6 824.5 57.6Z" fill="none" stroke="#444746" stroke-width="1.2" stroke-linecap="round" stroke-linejoin="round" />
<path d="M827 56.8V54.6M829 56.8V52.4M831.2 56.8V56.2" fill="none" stroke="#444746" stroke-width="1.1" stroke-linecap="round" stroke-linejoin="round" />
<path d="M847.4 51H854.4L851.8 54.4V57.9H850V54.4Z" fill="none" stroke="#444746" stroke-width="1.2" stroke-linecap="round" stroke-linejoin="round" />
<path d="M868.2 51.6H876.6V59.2H868.2ZM868.2 54.2H876.6M871 54.2V59.2M873.8 54.2V59.2M868.2 56.7H876.6" fill="none" stroke="#444746" stroke-width="1.1" stroke-linecap="round" stroke-linejoin="round" />
<path d="M866 57V49.6H874.6" fill="none" stroke="#444746" stroke-width="1.1" stroke-linecap="round" stroke-linejoin="round" />
<path d="M881.00 52.95h5.2l-2.6 2.7z" fill="#444746" />
<path d="M903.8 51.6V50.4H899V50.6L902 54.4L899 58.2V58.4H903.8V57.2" fill="none" stroke="#444746" stroke-width="1.25" stroke-linecap="round" stroke-linejoin="round" />
<path d="M58.80 80.80h5.2l-2.6 2.8z" fill="#444746" />
<path d="M74.00 118.20L76.95 121.40L79.90 118.20" fill="none" stroke="#fff" stroke-width="1.1" stroke-linecap="round" stroke-linejoin="round"/>
<path d="M99.2 116.3H107.3V124.3H99.2ZM99.2 119H107.3M101.9 119V124.3M104.6 119V124.3M99.2 121.6H107.3" fill="none" stroke="#fff" stroke-width="1.15" stroke-linecap="round" stroke-linejoin="round" />
<path d="M96.9 122V114H105.4" fill="none" stroke="#fff" stroke-width="1.15" stroke-linecap="round" stroke-linejoin="round" />
<path d="M38.50 137.4Q38.50 136.6 39.30 136.6H45.10Q45.90 136.6 45.90 137.4V142.9Q45.90 143.7 45.10 143.7H39.30Q38.50 143.7 38.50 142.9ZM38.50 138.9H45.90M40.50 135.5V137.2M43.90 135.5V137.2" fill="none" stroke="#fff" stroke-width="1.0" stroke-linecap="round" stroke-linejoin="round" />
<path d="M101.70 138.40L105.05 141.80L108.40 138.40" fill="none" stroke="#fff" stroke-width="1.15" stroke-linecap="round" stroke-linejoin="round"/>
<path d="M125.20 136.4H130.00Q132.90 136.4 132.90 139.55Q132.90 142.7 130.00 142.7H125.20Q122.30 142.7 122.30 139.55Q122.30 136.4 125.20 136.4Z" fill="none" stroke="#f1f5f3" stroke-width="1.1" stroke-linecap="round" stroke-linejoin="round" />
<path d="M127.30 138.8H130.50L128.90 140.7Z" fill="#fff" />
<path d="M185.40 138.40L188.75 141.80L192.10 138.40" fill="none" stroke="#fff" stroke-width="1.15" stroke-linecap="round" stroke-linejoin="round"/>
<path d="M208.90 136.4H213.70Q216.60 136.4 216.60 139.55Q216.60 142.7 213.70 142.7H208.90Q206.00 142.7 206.00 139.55Q206.00 136.4 208.90 136.4Z" fill="none" stroke="#f1f5f3" stroke-width="1.1" stroke-linecap="round" stroke-linejoin="round" />
<path d="M211.00 138.8H214.20L212.60 140.7Z" fill="#fff" />
<path d="M279.90 138.40L283.25 141.80L286.60 138.40" fill="none" stroke="#fff" stroke-width="1.15" stroke-linecap="round" stroke-linejoin="round"/>
<path d="M303.40 136.4H308.20Q311.10 136.4 311.10 139.55Q311.10 142.7 308.20 142.7H303.40Q300.50 142.7 300.50 139.55Q300.50 136.4 303.40 136.4Z" fill="none" stroke="#f1f5f3" stroke-width="1.1" stroke-linecap="round" stroke-linejoin="round" />
<path d="M305.50 138.8H308.70L307.10 140.7Z" fill="#fff" />
<path d="M351.90 138.40L355.25 141.80L358.60 138.40" fill="none" stroke="#fff" stroke-width="1.15" stroke-linecap="round" stroke-linejoin="round"/>
<path d="M448.00 138.40L451.35 141.80L454.70 138.40" fill="none" stroke="#fff" stroke-width="1.15" stroke-linecap="round" stroke-linejoin="round"/>
<path d="M471.50 136.4H476.30Q479.20 136.4 479.20 139.55Q479.20 142.7 476.30 142.7H471.50Q468.60 142.7 468.60 139.55Q468.60 136.4 471.50 136.4Z" fill="none" stroke="#f1f5f3" stroke-width="1.1" stroke-linecap="round" stroke-linejoin="round" />
<path d="M473.60 138.8H476.80L475.20 140.7Z" fill="#fff" />
<path d="M528.10 138.40L531.45 141.80L534.80 138.40" fill="none" stroke="#fff" stroke-width="1.15" stroke-linecap="round" stroke-linejoin="round"/>
<path d="M604.20 138.40L607.55 141.80L610.90 138.40" fill="none" stroke="#fff" stroke-width="1.15" stroke-linecap="round" stroke-linejoin="round"/>
<path d="M673.20 138.40L676.55 141.80L679.90 138.40" fill="none" stroke="#fff" stroke-width="1.15" stroke-linecap="round" stroke-linejoin="round"/>
<path d="M753.90 138.40L757.25 141.80L760.60 138.40" fill="none" stroke="#fff" stroke-width="1.15" stroke-linecap="round" stroke-linejoin="round"/>
<path d="M777.40 136.4H782.20Q785.10 136.4 785.10 139.55Q785.10 142.7 782.20 142.7H777.40Q774.50 142.7 774.50 139.55Q774.50 136.4 777.40 136.4Z" fill="none" stroke="#f1f5f3" stroke-width="1.1" stroke-linecap="round" stroke-linejoin="round" />
<path d="M779.50 138.8H782.70L781.10 140.7Z" fill="#fff" />
<path d="M841.60 138.40L844.95 141.80L848.30 138.40" fill="none" stroke="#fff" stroke-width="1.15" stroke-linecap="round" stroke-linejoin="round"/>
<path d="M954.90 138.40L958.25 141.80L961.60 138.40" fill="none" stroke="#fff" stroke-width="1.15" stroke-linecap="round" stroke-linejoin="round"/>
<path d="M183.30 160.60h5.8l-2.9 3.1z" fill="#1f1f1f" clip-path="url(#gclip)"/>
<path d="M277.80 160.60h5.8l-2.9 3.1z" fill="#1f1f1f" clip-path="url(#gclip)"/>
<path d="M349.80 160.60h5.8l-2.9 3.1z" fill="#1f1f1f" clip-path="url(#gclip)"/>
<path d="M526.00 160.60h5.8l-2.9 3.1z" fill="#1f1f1f" clip-path="url(#gclip)"/>
<path d="M839.50 160.60h5.8l-2.9 3.1z" fill="#1f1f1f" clip-path="url(#gclip)"/>
<path d="M183.30 181.02h5.8l-2.9 3.1z" fill="#1f1f1f" clip-path="url(#gclip)"/>
<path d="M277.80 181.02h5.8l-2.9 3.1z" fill="#1f1f1f" clip-path="url(#gclip)"/>
<path d="M349.80 181.02h5.8l-2.9 3.1z" fill="#1f1f1f" clip-path="url(#gclip)"/>
<path d="M526.00 181.02h5.8l-2.9 3.1z" fill="#1f1f1f" clip-path="url(#gclip)"/>
<path d="M839.50 181.02h5.8l-2.9 3.1z" fill="#1f1f1f" clip-path="url(#gclip)"/>
<path d="M183.30 201.44h5.8l-2.9 3.1z" fill="#1f1f1f" clip-path="url(#gclip)"/>
<path d="M277.80 201.44h5.8l-2.9 3.1z" fill="#1f1f1f" clip-path="url(#gclip)"/>
<path d="M349.80 201.44h5.8l-2.9 3.1z" fill="#1f1f1f" clip-path="url(#gclip)"/>
<path d="M526.00 201.44h5.8l-2.9 3.1z" fill="#1f1f1f" clip-path="url(#gclip)"/>
<path d="M839.50 201.44h5.8l-2.9 3.1z" fill="#1f1f1f" clip-path="url(#gclip)"/>
<path d="M183.30 221.86h5.8l-2.9 3.1z" fill="#1f1f1f" clip-path="url(#gclip)"/>
<path d="M277.80 221.86h5.8l-2.9 3.1z" fill="#1f1f1f" clip-path="url(#gclip)"/>
<path d="M349.80 221.86h5.8l-2.9 3.1z" fill="#1f1f1f" clip-path="url(#gclip)"/>
<path d="M526.00 221.86h5.8l-2.9 3.1z" fill="#1f1f1f" clip-path="url(#gclip)"/>
<path d="M839.50 221.86h5.8l-2.9 3.1z" fill="#1f1f1f" clip-path="url(#gclip)"/>
<path d="M183.30 242.28h5.8l-2.9 3.1z" fill="#1f1f1f" clip-path="url(#gclip)"/>
<path d="M277.80 242.28h5.8l-2.9 3.1z" fill="#1f1f1f" clip-path="url(#gclip)"/>
<path d="M349.80 242.28h5.8l-2.9 3.1z" fill="#1f1f1f" clip-path="url(#gclip)"/>
<path d="M526.00 242.28h5.8l-2.9 3.1z" fill="#1f1f1f" clip-path="url(#gclip)"/>
<path d="M839.50 242.28h5.8l-2.9 3.1z" fill="#1f1f1f" clip-path="url(#gclip)"/>
<path d="M183.30 262.70h5.8l-2.9 3.1z" fill="#1f1f1f" clip-path="url(#gclip)"/>
<path d="M277.80 262.70h5.8l-2.9 3.1z" fill="#1f1f1f" clip-path="url(#gclip)"/>
<path d="M349.80 262.70h5.8l-2.9 3.1z" fill="#1f1f1f" clip-path="url(#gclip)"/>
<path d="M526.00 262.70h5.8l-2.9 3.1z" fill="#1f1f1f" clip-path="url(#gclip)"/>
<path d="M839.50 262.70h5.8l-2.9 3.1z" fill="#1f1f1f" clip-path="url(#gclip)"/>
<path d="M183.30 283.12h5.8l-2.9 3.1z" fill="#1f1f1f" clip-path="url(#gclip)"/>
<path d="M277.80 283.12h5.8l-2.9 3.1z" fill="#1f1f1f" clip-path="url(#gclip)"/>
<path d="M349.80 283.12h5.8l-2.9 3.1z" fill="#1f1f1f" clip-path="url(#gclip)"/>
<path d="M526.00 283.12h5.8l-2.9 3.1z" fill="#1f1f1f" clip-path="url(#gclip)"/>
<path d="M839.50 283.12h5.8l-2.9 3.1z" fill="#1f1f1f" clip-path="url(#gclip)"/>
<path d="M183.30 303.54h5.8l-2.9 3.1z" fill="#1f1f1f" clip-path="url(#gclip)"/>
<path d="M277.80 303.54h5.8l-2.9 3.1z" fill="#1f1f1f" clip-path="url(#gclip)"/>
<path d="M349.80 303.54h5.8l-2.9 3.1z" fill="#1f1f1f" clip-path="url(#gclip)"/>
<path d="M526.00 303.54h5.8l-2.9 3.1z" fill="#1f1f1f" clip-path="url(#gclip)"/>
<path d="M839.50 303.54h5.8l-2.9 3.1z" fill="#1f1f1f" clip-path="url(#gclip)"/>
<path d="M183.30 323.96h5.8l-2.9 3.1z" fill="#1f1f1f" clip-path="url(#gclip)"/>
<path d="M277.80 323.96h5.8l-2.9 3.1z" fill="#1f1f1f" clip-path="url(#gclip)"/>
<path d="M349.80 323.96h5.8l-2.9 3.1z" fill="#1f1f1f" clip-path="url(#gclip)"/>
<path d="M526.00 323.96h5.8l-2.9 3.1z" fill="#1f1f1f" clip-path="url(#gclip)"/>
<path d="M839.50 323.96h5.8l-2.9 3.1z" fill="#1f1f1f" clip-path="url(#gclip)"/>
<path d="M183.30 344.38h5.8l-2.9 3.1z" fill="#1f1f1f" clip-path="url(#gclip)"/>
<path d="M277.80 344.38h5.8l-2.9 3.1z" fill="#1f1f1f" clip-path="url(#gclip)"/>
<path d="M349.80 344.38h5.8l-2.9 3.1z" fill="#1f1f1f" clip-path="url(#gclip)"/>
<path d="M526.00 344.38h5.8l-2.9 3.1z" fill="#1f1f1f" clip-path="url(#gclip)"/>
<path d="M839.50 344.38h5.8l-2.9 3.1z" fill="#1f1f1f" clip-path="url(#gclip)"/>
<path d="M183.30 364.80h5.8l-2.9 3.1z" fill="#1f1f1f" clip-path="url(#gclip)"/>
<path d="M277.80 364.80h5.8l-2.9 3.1z" fill="#1f1f1f" clip-path="url(#gclip)"/>
<path d="M349.80 364.80h5.8l-2.9 3.1z" fill="#1f1f1f" clip-path="url(#gclip)"/>
<path d="M526.00 364.80h5.8l-2.9 3.1z" fill="#1f1f1f" clip-path="url(#gclip)"/>
<path d="M839.50 364.80h5.8l-2.9 3.1z" fill="#1f1f1f" clip-path="url(#gclip)"/>
<path d="M183.30 385.22h5.8l-2.9 3.1z" fill="#1f1f1f" clip-path="url(#gclip)"/>
<path d="M277.80 385.22h5.8l-2.9 3.1z" fill="#1f1f1f" clip-path="url(#gclip)"/>
<path d="M349.80 385.22h5.8l-2.9 3.1z" fill="#1f1f1f" clip-path="url(#gclip)"/>
<path d="M526.00 385.22h5.8l-2.9 3.1z" fill="#1f1f1f" clip-path="url(#gclip)"/>
<path d="M839.50 385.22h5.8l-2.9 3.1z" fill="#1f1f1f" clip-path="url(#gclip)"/>
<path d="M183.30 405.64h5.8l-2.9 3.1z" fill="#1f1f1f" clip-path="url(#gclip)"/>
<path d="M277.80 405.64h5.8l-2.9 3.1z" fill="#1f1f1f" clip-path="url(#gclip)"/>
<path d="M349.80 405.64h5.8l-2.9 3.1z" fill="#1f1f1f" clip-path="url(#gclip)"/>
<path d="M526.00 405.64h5.8l-2.9 3.1z" fill="#1f1f1f" clip-path="url(#gclip)"/>
<path d="M839.50 405.64h5.8l-2.9 3.1z" fill="#1f1f1f" clip-path="url(#gclip)"/>
<path d="M183.30 426.06h5.8l-2.9 3.1z" fill="#1f1f1f" clip-path="url(#gclip)"/>
<path d="M277.80 426.06h5.8l-2.9 3.1z" fill="#1f1f1f" clip-path="url(#gclip)"/>
<path d="M349.80 426.06h5.8l-2.9 3.1z" fill="#1f1f1f" clip-path="url(#gclip)"/>
<path d="M526.00 426.06h5.8l-2.9 3.1z" fill="#1f1f1f" clip-path="url(#gclip)"/>
<path d="M839.50 426.06h5.8l-2.9 3.1z" fill="#1f1f1f" clip-path="url(#gclip)"/>
<path d="M183.30 446.48h5.8l-2.9 3.1z" fill="#1f1f1f" clip-path="url(#gclip)"/>
<path d="M277.80 446.48h5.8l-2.9 3.1z" fill="#1f1f1f" clip-path="url(#gclip)"/>
<path d="M349.80 446.48h5.8l-2.9 3.1z" fill="#1f1f1f" clip-path="url(#gclip)"/>
<path d="M526.00 446.48h5.8l-2.9 3.1z" fill="#1f1f1f" clip-path="url(#gclip)"/>
<path d="M839.50 446.48h5.8l-2.9 3.1z" fill="#1f1f1f" clip-path="url(#gclip)"/>
<path d="M183.30 466.90h5.8l-2.9 3.1z" fill="#1f1f1f" clip-path="url(#gclip)"/>
<path d="M277.80 466.90h5.8l-2.9 3.1z" fill="#1f1f1f" clip-path="url(#gclip)"/>
<path d="M349.80 466.90h5.8l-2.9 3.1z" fill="#1f1f1f" clip-path="url(#gclip)"/>
<path d="M526.00 466.90h5.8l-2.9 3.1z" fill="#1f1f1f" clip-path="url(#gclip)"/>
<path d="M839.50 466.90h5.8l-2.9 3.1z" fill="#1f1f1f" clip-path="url(#gclip)"/>
<path d="M183.30 487.32h5.8l-2.9 3.1z" fill="#1f1f1f" clip-path="url(#gclip)"/>
<path d="M277.80 487.32h5.8l-2.9 3.1z" fill="#1f1f1f" clip-path="url(#gclip)"/>
<path d="M349.80 487.32h5.8l-2.9 3.1z" fill="#1f1f1f" clip-path="url(#gclip)"/>
<path d="M526.00 487.32h5.8l-2.9 3.1z" fill="#1f1f1f" clip-path="url(#gclip)"/>
<path d="M839.50 487.32h5.8l-2.9 3.1z" fill="#1f1f1f" clip-path="url(#gclip)"/>
<path d="M183.30 507.74h5.8l-2.9 3.1z" fill="#1f1f1f" clip-path="url(#gclip)"/>
<path d="M277.80 507.74h5.8l-2.9 3.1z" fill="#1f1f1f" clip-path="url(#gclip)"/>
<path d="M349.80 507.74h5.8l-2.9 3.1z" fill="#1f1f1f" clip-path="url(#gclip)"/>
<path d="M526.00 507.74h5.8l-2.9 3.1z" fill="#1f1f1f" clip-path="url(#gclip)"/>
<path d="M839.50 507.74h5.8l-2.9 3.1z" fill="#1f1f1f" clip-path="url(#gclip)"/>
<path d="M183.30 528.16h5.8l-2.9 3.1z" fill="#1f1f1f" clip-path="url(#gclip)"/>
<path d="M277.80 528.16h5.8l-2.9 3.1z" fill="#1f1f1f" clip-path="url(#gclip)"/>
<path d="M349.80 528.16h5.8l-2.9 3.1z" fill="#1f1f1f" clip-path="url(#gclip)"/>
<path d="M526.00 528.16h5.8l-2.9 3.1z" fill="#1f1f1f" clip-path="url(#gclip)"/>
<path d="M839.50 528.16h5.8l-2.9 3.1z" fill="#1f1f1f" clip-path="url(#gclip)"/>
<path d="M183.30 548.58h5.8l-2.9 3.1z" fill="#1f1f1f" clip-path="url(#gclip)"/>
<path d="M277.80 548.58h5.8l-2.9 3.1z" fill="#1f1f1f" clip-path="url(#gclip)"/>
<path d="M349.80 548.58h5.8l-2.9 3.1z" fill="#1f1f1f" clip-path="url(#gclip)"/>
<path d="M526.00 548.58h5.8l-2.9 3.1z" fill="#1f1f1f" clip-path="url(#gclip)"/>
<path d="M839.50 548.58h5.8l-2.9 3.1z" fill="#1f1f1f" clip-path="url(#gclip)"/>
<path d="M183.30 569.00h5.8l-2.9 3.1z" fill="#1f1f1f" clip-path="url(#gclip)"/>
<path d="M277.80 569.00h5.8l-2.9 3.1z" fill="#1f1f1f" clip-path="url(#gclip)"/>
<path d="M349.80 569.00h5.8l-2.9 3.1z" fill="#1f1f1f" clip-path="url(#gclip)"/>
<path d="M526.00 569.00h5.8l-2.9 3.1z" fill="#1f1f1f" clip-path="url(#gclip)"/>
<path d="M839.50 569.00h5.8l-2.9 3.1z" fill="#1f1f1f" clip-path="url(#gclip)"/>
<rect x="366.6" y="234.2" width="95.5" height="20.1" fill="none" stroke="#1c66e6" stroke-width="1.45"/>
<circle cx="462.6" cy="254.8" r="2.7" fill="#0b57d0"/>
<path d="M39 595.3H45.4M42.2 592.1V598.5" fill="none" stroke="#444746" stroke-width="1.2" stroke-linecap="round" stroke-linejoin="round" />
<path d="M65 592.8H74.2M65 595.5H74.2M65 598.2H74.2" fill="none" stroke="#444746" stroke-width="1.2" stroke-linecap="round" stroke-linejoin="round" stroke-linecap="butt"/>
<path d="M102.8 594.2H109.8Q110.5 594.2 110.5 594.9V600.6Q110.5 601.3 109.8 601.3H102.8Q102.1 601.3 102.1 600.6V594.9Q102.1 594.2 102.8 594.2ZM106.3 596.7A1 1 0 1 0 106.3 598.9A1 1 0 1 0 106.3 596.7Z" fill="#444746" fill-rule="evenodd"/>
<path d="M104.1 594.2V592.6Q104.1 590.5 106.3 590.5Q108.5 590.5 108.5 592.6V594.2" fill="none" stroke="#444746" stroke-width="1.2" stroke-linecap="round" stroke-linejoin="round" />
<path d="M173.90 593.80h5.2l-2.6 2.6z" fill="#444746" />
<path d="M260.60 593.80h5.2l-2.6 2.6z" fill="#444746" />
<path d="M375.50 593.75h5.4l-2.7 2.7z" fill="#0b57d0" />
<path d="M432.90 593.80h5.2l-2.6 2.6z" fill="#444746" />
<path d="M546.50 593.80h5.2l-2.6 2.6z" fill="#444746" />
</svg>
</body></html>
